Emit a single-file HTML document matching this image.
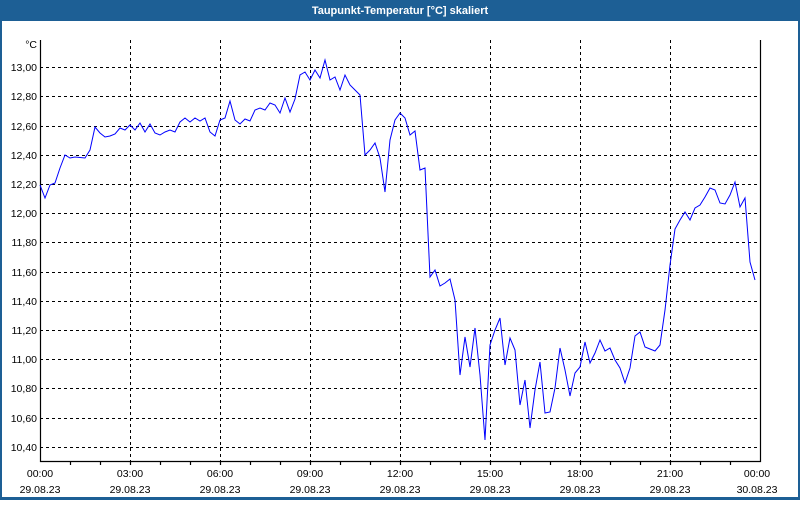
<!DOCTYPE html>
<html><head><style>
body{margin:0;width:800px;height:500px;overflow:hidden;background:#fff;font-family:"Liberation Sans",sans-serif}
</style></head><body>
<svg width="800" height="500" xmlns="http://www.w3.org/2000/svg" font-family="Liberation Sans, sans-serif" font-size="10.5">
<rect x="0" y="0" width="800" height="500" fill="#1d5f95"/>
<rect x="2" y="21" width="796" height="476" fill="#fff"/>
<text x="400" y="14" text-anchor="middle" fill="#fff" font-weight="bold" font-size="11">Taupunkt-Temperatur [°C] skaliert</text>
<g stroke="#000" stroke-dasharray="3,3" stroke-width="1">
<line x1="40" y1="67.5" x2="760" y2="67.5"/><line x1="40" y1="96.5" x2="760" y2="96.5"/><line x1="40" y1="126.5" x2="760" y2="126.5"/><line x1="40" y1="155.5" x2="760" y2="155.5"/><line x1="40" y1="184.5" x2="760" y2="184.5"/><line x1="40" y1="213.5" x2="760" y2="213.5"/><line x1="40" y1="242.5" x2="760" y2="242.5"/><line x1="40" y1="272.5" x2="760" y2="272.5"/><line x1="40" y1="301.5" x2="760" y2="301.5"/><line x1="40" y1="330.5" x2="760" y2="330.5"/><line x1="40" y1="359.5" x2="760" y2="359.5"/><line x1="40" y1="388.5" x2="760" y2="388.5"/><line x1="40" y1="418.5" x2="760" y2="418.5"/><line x1="40" y1="447.5" x2="760" y2="447.5"/>
<line x1="130.5" y1="40" x2="130.5" y2="461"/><line x1="220.5" y1="40" x2="220.5" y2="461"/><line x1="310.5" y1="40" x2="310.5" y2="461"/><line x1="400.5" y1="40" x2="400.5" y2="461"/><line x1="490.5" y1="40" x2="490.5" y2="461"/><line x1="580.5" y1="40" x2="580.5" y2="461"/><line x1="670.5" y1="40" x2="670.5" y2="461"/>
</g>
<g stroke="#000" stroke-width="1.2" fill="none">
<path d="M40.5 40V461.5H760.5V40"/>
<path d="M70.5 461v4M100.5 461v4M130.5 461v4M160.5 461v4M190.5 461v4M220.5 461v4M250.5 461v4M280.5 461v4M310.5 461v4M340.5 461v4M370.5 461v4M400.5 461v4M430.5 461v4M460.5 461v4M490.5 461v4M520.5 461v4M550.5 461v4M580.5 461v4M610.5 461v4M640.5 461v4M670.5 461v4M700.5 461v4M730.5 461v4"/>
</g>
<g text-anchor="end" fill="#000">
<text x="37" y="48">°C</text>
<text x="37" y="71">13,00</text><text x="37" y="100">12,80</text><text x="37" y="130">12,60</text><text x="37" y="159">12,40</text><text x="37" y="188">12,20</text><text x="37" y="217">12,00</text><text x="37" y="246">11,80</text><text x="37" y="276">11,60</text><text x="37" y="305">11,40</text><text x="37" y="334">11,20</text><text x="37" y="363">11,00</text><text x="37" y="392">10,80</text><text x="37" y="422">10,60</text><text x="37" y="451">10,40</text>
</g>
<g text-anchor="middle" fill="#000">
<text x="40" y="477">00:00</text><text x="40" y="493">29.08.23</text>
<text x="130" y="477">03:00</text><text x="130" y="493">29.08.23</text>
<text x="220" y="477">06:00</text><text x="220" y="493">29.08.23</text>
<text x="310" y="477">09:00</text><text x="310" y="493">29.08.23</text>
<text x="400" y="477">12:00</text><text x="400" y="493">29.08.23</text>
<text x="490" y="477">15:00</text><text x="490" y="493">29.08.23</text>
<text x="580" y="477">18:00</text><text x="580" y="493">29.08.23</text>
<text x="670" y="477">21:00</text><text x="670" y="493">29.08.23</text>
<text x="757" y="477">00:00</text><text x="757" y="493">30.08.23</text>
</g>
<polyline fill="none" stroke="#0000ff" stroke-width="1" points="40,185 45,198 50,185 55,183 60,168 65,155 70,158 75,157 85,158 90,150 95,127 100,133 105,137 110,136 115,134 120,128 125,130 130,125 135,130 140,123 145,132 150,124 155,133 160,135 165,132 170,130 175,132 180,122 185,118 190,122 195,118 200,121 205,118 210,132 215,136 220,120 225,118 230,101 235,120 240,124 245,119 250,121 255,110 260,108 265,110 270,103 275,105 280,113 285,98 290,112 295,99 300,75 305,72 310,80 315,70 320,78 325,60 330,80 335,77 340,90 345,75 350,85 355,90 360,95 365,155 370,150 375,143 380,158 385,192 390,140 395,120 400,113 405,118 410,135 415,131 420,170 425,168 430,277 435,270 440,286 445,283 450,279 455,300 460,375 465,337 470,367 475,328 480,375 485,440 490,345 495,330 500,318 505,365 510,338 515,350 520,405 525,380 530,428 535,390 540,362 545,413 550,412 555,388 560,348 565,370 570,396 575,373 580,367 585,342 590,363 595,353 600,340 605,351 610,348 615,360 620,368 625,383 630,368 635,336 640,332 645,347 650,349 655,351 660,345 665,310 670,265 675,229 680,220 685,212 690,220 695,208 700,205 705,197 710,188 715,190 720,203 725,204 730,195 735,182 740,207 745,198 750,262 755,280"/>
</svg>
</body></html>
